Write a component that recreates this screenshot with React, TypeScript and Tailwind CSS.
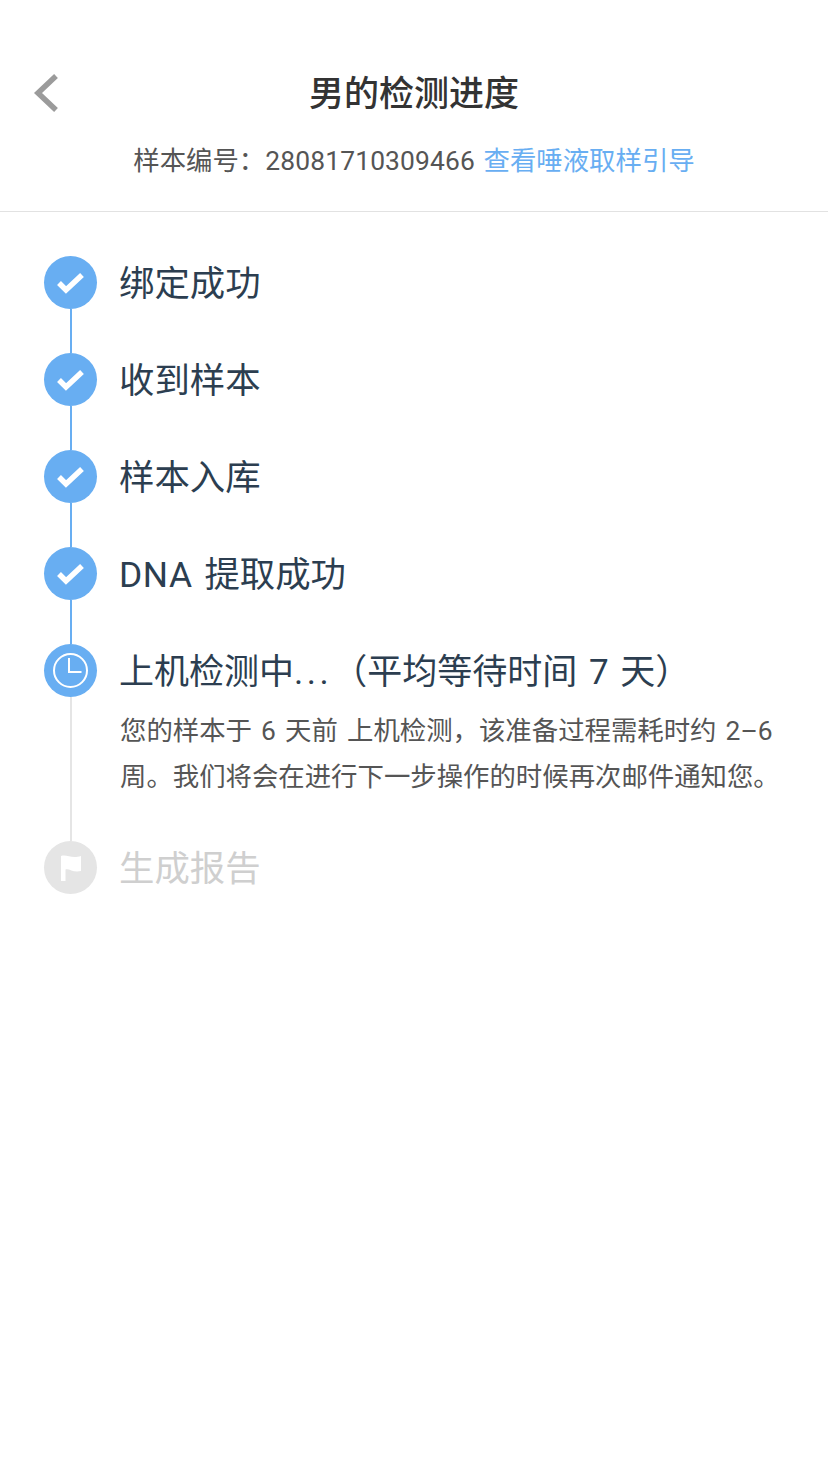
const font = "font-['Roboto','Noto_Sans_CJK_SC',sans-serif]";

const doneSteps = [
  <>绑定成功</>,
  <>收到样本</>,
  <>样本入库</>,
  <><span className="tracking-[0.6px]">DNA</span> 提取成功</>,
];

function Connector({ grey, grow }: { grey?: boolean; grow?: boolean }) {
  return <div className={`ml-[26px] w-[2px] ${grow ? 'flex-1' : 'h-[44px]'} ${grey ? 'bg-[#e5e5e5]' : 'bg-[#68aef2]'}`} />;
}

function Dot({ grey, children }: { grey?: boolean; children: React.ReactNode }) {
  return (
    <div className={`flex h-[53px] w-[53px] shrink-0 items-center justify-center rounded-full ${grey ? 'bg-[#e5e5e5]' : 'bg-[#68aef2]'}`}>
      {children}
    </div>
  );
}

function StepTitle({ grey, children }: { grey?: boolean; children: React.ReactNode }) {
  return (
    <div className={`ml-[-1px] pt-[2px] text-[35.4px] leading-[53px] [word-spacing:3px] ${grey ? 'text-[#cfcfcf]' : 'text-[#2c3e50]'}`}>{children}</div>
  );
}

export default function App() {
  return (
    <div className={`min-h-[1473px] bg-white ${font}`}>
      <header className="relative flex h-[212px] flex-col items-center border-b border-[#e2e2e2] pt-[68px]">
        <svg className="absolute left-[32px] top-[72px]" width="28" height="42" viewBox="0 0 28 42" fill="none">
          <path d="M24 4 L6 21 L24 38" stroke="#9b9b9b" strokeWidth="5.5" />
        </svg>
        <h1 className="text-[35px] font-medium leading-[54px] text-[#333333]">男的检测进度</h1>
        <p className="mt-[18px] text-[26.4px] leading-[42px] text-[#555555] [word-spacing:2px]">
          样本编号：<span className="tracking-[0.15px]">28081710309466</span> <span className="text-[#68aef2]">查看唾液取样引导</span>
        </p>
      </header>

      <main className="px-[44px] pt-[44px]">
        {doneSteps.map((step, i) => (
          <div key={i} className="flex gap-[23px]">
            <div className="flex flex-col">
              <Dot>
                <svg width="27" height="22" viewBox="0 0 27 22" fill="none" stroke="white" strokeWidth="5.5">
                  <path d="M2 11 L9 18 L25 3" />
                </svg>
              </Dot>
              <Connector />
            </div>
            <StepTitle>{step}</StepTitle>
          </div>
        ))}

        <div className="flex gap-[23px]">
          <div className="flex flex-col">
            <Dot>
              <svg width="37" height="37" viewBox="0 0 37 37" fill="none" stroke="white" strokeWidth="2">
                <circle cx="18.5" cy="18.5" r="16.5" />
                <path d="M17 6 V20 H29.5" />
              </svg>
            </Dot>
            <Connector grey grow />
          </div>
          <div className="pb-[41px]">
            <StepTitle>
              <span className="text-[35px]">上机检测中<span className="tracking-[3.5px]">...</span>（平均等待时间 7 天）</span>
            </StepTitle>
            <p className="w-[664px] pt-[9px] text-[26.4px] leading-[46px] text-[#555555] [word-spacing:2.6px]">
              您的样本于 6 天前 上机检测，该准备过程需耗时约 2–6 周。我们将会在进行下一步操作的时候再次邮件通知您。
            </p>
          </div>
        </div>

        <div className="flex gap-[23px]">
          <Dot grey>
            <svg width="24" height="28" viewBox="0 0 24 28" fill="white">
              <path d="M2 2 C8 0 12 5 22 2 V17 C14 19 10 14 6.5 15.5 V27 H2 Z" />
            </svg>
          </Dot>
          <StepTitle grey>生成报告</StepTitle>
        </div>
      </main>
    </div>
  );
}
